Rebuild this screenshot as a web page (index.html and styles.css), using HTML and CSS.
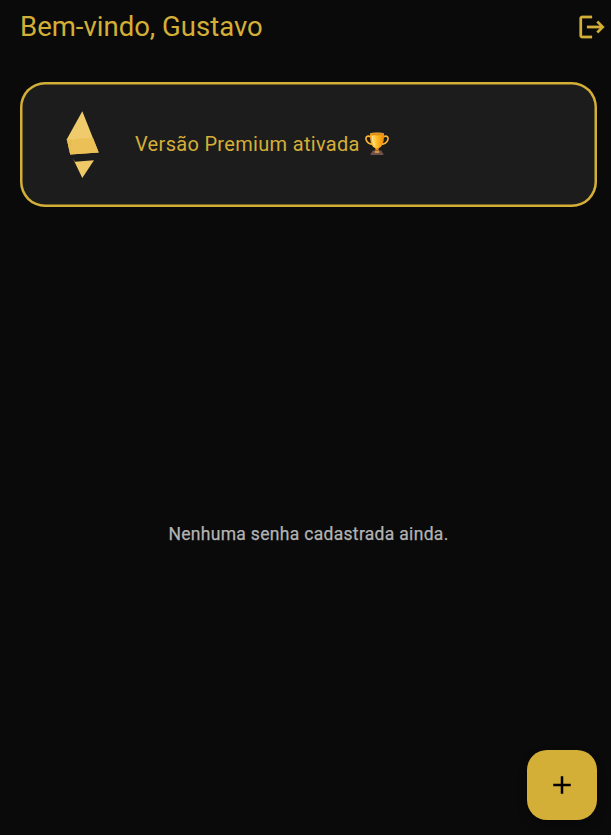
FILE: index.html
```
<!DOCTYPE html>
<html lang="pt-BR">
<head>
<meta charset="utf-8">
<title>Senhas</title>
<link rel="stylesheet" href="styles.css">
</head>
<body>
<div class="app">
  <header class="header">
    <h1 class="title">Bem-vindo, Gustavo</h1>
    <svg class="logout" viewBox="0 0 24 24" role="img" aria-label="Sair"><path d="M17 7l-1.41 1.41L18.17 11H8v2h10.17l-2.58 2.58L17 17l5-5zM4 5h8V3H4c-1.1 0-2 .9-2 2v14c0 1.1.9 2 2 2h8v-2H4z"/></svg>
  </header>
  <section class="card">
    <svg class="gem" viewBox="0 0 34 68" aria-hidden="true">
      <path fill="#efcb6b" d="M16.3 .3 32.7 41.500 4.200 43.600 .8 28.300z"/>
      <path fill="#ebc057" d="M8 28 27 27 32.700 41.500 4.200 43.600z"/>
      <path fill="#e8bd54" d="M.8 28.300 7.300 28.800 4.200 43.600z"/>
      <path fill="#efc966" d="M6.700 47 9 50.700 28 49.300 16.300 67z"/>
    </svg>
    <p class="card-text"><span class="card-label">Versão Premium ativada</span>
      <svg class="trophy" viewBox="0 0 24 24" role="img" aria-label="Troféu">
        <defs><linearGradient id="gold"><stop offset="0" stop-color="#f69b13"/><stop offset=".32" stop-color="#ffd14b"/><stop offset=".5" stop-color="#ffba28"/><stop offset="1" stop-color="#f18a08"/></linearGradient></defs>
        <path d="M6 5C2 2.8.2 5 1.3 8.2 2.3 11 5 12 8.2 12.5M18 5c4-2.200 5.800 0 4.700 3.200-1 2.800-3.700 3.800-6.900 4.300" fill="none" stroke="#ffb735" stroke-width="1.6"/>
        <path d="M10 15h4l-.5 3 2 2h-7l2-2z" fill="#e98b0c"/>
        <path d="M5 2c0 7 .8 14 7 14.500C18.200 16 19 9 19 2z" fill="url(#gold)"/>
        <path d="M7.500 4c0 4 .5 7 2 9" fill="none" stroke="#ffe493" stroke-width="1.300"/>
        <ellipse cx="12" cy="2.200" rx="7" ry="1.300" fill="#e68e12"/>
        <path d="M5 1.800c3-1.300 11-1.300 14 0" fill="none" stroke="#ffc84a" stroke-width=".7"/>
        <path d="M7.500 18.500h9l.7 2.300H18.300V23H5.700v-2.200h1.100z" fill="#70504a"/>
        <path d="M9.800 19.200h4.400v1.600H9.800z" fill="#e1a548"/>
      </svg>
    </p>
  </section>
  <main class="empty"><p class="empty-text">Nenhuma senha cadastrada ainda.</p></main>
</div>
<button class="fab" aria-label="Adicionar"><svg class="plus" viewBox="0 0 24 24"><path d="M19 13h-6v6h-2v-6H5v-2h6V5h2v6h6z"/></svg></button>
</body>
</html>
```
FILE: styles.css
```
* { box-sizing: border-box; }
body {
  margin: 0;
  background: #0a0a0a;
  color: #d4af37;
  font-family: Roboto, sans-serif;
}
.app {
  height: 835px;
  padding: 0 4.5px 0 20px;
  display: flex;
  flex-direction: column;
}
.header {
  height: 54px;
  display: flex;
  align-items: center;
  justify-content: space-between;
}
.title {
  margin: 0 0 2px;
  font-size: 27.5px;
  font-weight: 400;
  line-height: 35px;
}
.logout {
  width: 30px;
  height: 30px;
  fill: currentColor;
  stroke: currentColor;
  stroke-width: .2;
}
.card {
  height: 125px;
  margin: 28px 9.5px 0 0;
  padding-left: 46px;
  display: flex;
  align-items: center;
  gap: 35px;
  border-radius: 25px;
  background: #1c1c1c;
  box-shadow: inset 0 0 0 2.5px #d4af37;
}
.gem { width: 34px; height: 68px; }
.card-text {
  margin: 0;
  display: flex;
  align-items: center;
  gap: 5px;
  font-size: 20px;
  line-height: 30px;
  letter-spacing: .3125px;
}
.card-label { margin-bottom: 2px; }
.trophy { width: 24px; height: 24px; margin-bottom: 2px; }
.empty {
  flex: 1;
  padding-right: 9.5px;
  display: flex;
  align-items: center;
  justify-content: center;
}
.empty-text {
  margin: 26px 0 0;
  color: #b3b3b3;
  font-size: 17.5px;
  font-weight: 400;
  line-height: 25px;
  letter-spacing: .3125px;
  -webkit-text-stroke: .25px currentColor;
}
.fab {
  position: fixed;
  right: 14px;
  bottom: 15px;
  width: 70px;
  height: 70px;
  padding: 0;
  border: 0;
  border-radius: 20px;
  display: grid;
  place-items: center;
  background: #d4af37;
  box-shadow: 0 5px 10px rgba(0, 0, 0, .25);
}
.plus { width: 30px; height: 30px; fill: #000; }
```
